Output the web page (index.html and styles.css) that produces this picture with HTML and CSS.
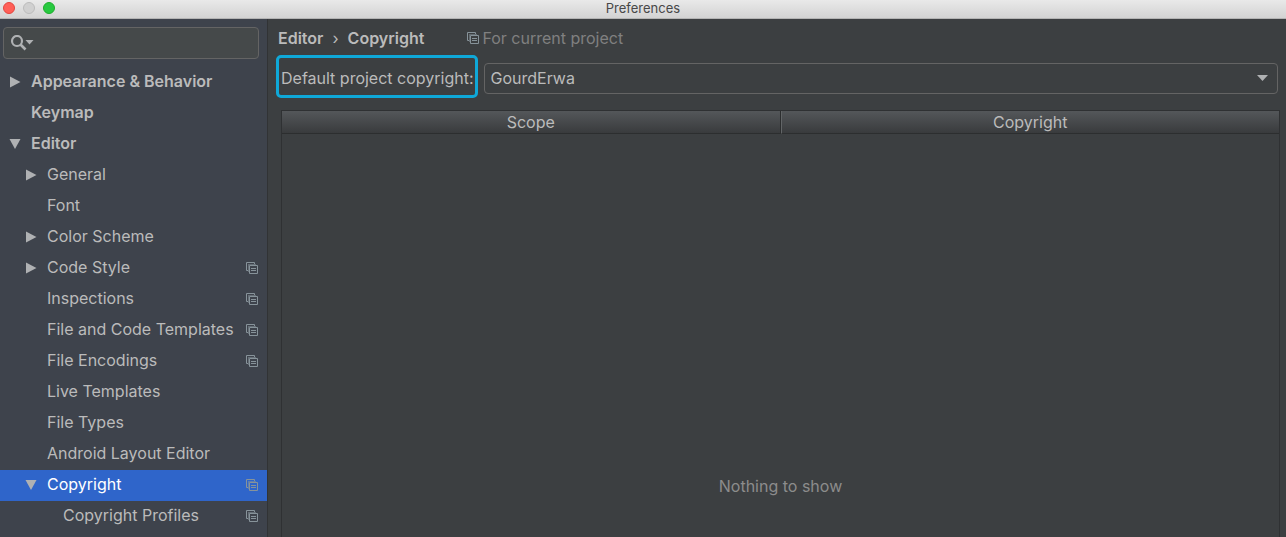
FILE: index.html
```
<!DOCTYPE html>
<html lang="en">
<head>
<meta charset="utf-8">
<title>Preferences</title>
<link rel="stylesheet" href="styles.css">
</head>
<body>
<svg class="symbols" aria-hidden="true">
  <symbol id="right" viewBox="0 0 12 12"><path d="M1 0.5V11.5L11.5 6Z" fill="#afb1b3"/></symbol>
  <symbol id="down" viewBox="0 0 12 12"><path d="M0.5 1H11.5L6 11Z" fill="#afb1b3"/></symbol>
  <symbol id="project" viewBox="0 0 12 12">
    <path d="M2 8.5H0.5V0.5H8.5V2" fill="none" stroke="currentColor"/>
    <path d="M2 2H10V3H3V10H2Z" fill="currentColor" opacity="0.55"/>
    <path d="M3.5 3.5H11.5V11.5H3.5ZM5 6.5H10M5 8.5H10" fill="none" stroke="currentColor"/>
  </symbol>
</svg>
<header class="titlebar">
  <div class="lights">
    <button class="light close" aria-label="Close"></button>
    <button class="light minimize" aria-label="Minimize" disabled></button>
    <button class="light expand" aria-label="Zoom"></button>
  </div>
  <h1 class="window-title">Preferences</h1>
</header>
<div class="window">
  <nav class="sidebar" aria-label="Settings">
    <label class="search">
      <svg class="search-icon" viewBox="0 0 24 16" aria-hidden="true">
        <circle cx="7" cy="6" r="5" fill="none" stroke="#afb1b3" stroke-width="2.2"/>
        <path d="M10.5 9.5L15.5 14.5" stroke="#afb1b3" stroke-width="2.6"/>
        <path d="M15.5 5H23.5L19.5 9.5Z" fill="#afb1b3"/>
      </svg>
      <input class="search-input" type="text" aria-label="Search settings">
    </label>
    <ul class="tree">
      <li><a class="row top" href="#appearance"><svg class="arrow"><use href="#right"/></svg><span class="name">Appearance &amp; Behavior</span></a></li>
      <li><a class="row top" href="#keymap"><span class="arrow"></span><span class="name">Keymap</span></a></li>
      <li><a class="row top" href="#editor"><svg class="arrow"><use href="#down"/></svg><span class="name">Editor</span></a>
        <ul class="tree-group">
          <li><a class="row child" href="#general"><svg class="arrow"><use href="#right"/></svg><span class="name">General</span></a></li>
          <li><a class="row child" href="#font"><span class="arrow"></span><span class="name">Font</span></a></li>
          <li><a class="row child" href="#color-scheme"><svg class="arrow"><use href="#right"/></svg><span class="name">Color Scheme</span></a></li>
          <li><a class="row child" href="#code-style"><svg class="arrow"><use href="#right"/></svg><span class="name">Code Style</span><svg class="scope-icon"><use href="#project"/></svg></a></li>
          <li><a class="row child" href="#inspections"><span class="arrow"></span><span class="name">Inspections</span><svg class="scope-icon"><use href="#project"/></svg></a></li>
          <li><a class="row child" href="#file-templates"><span class="arrow"></span><span class="name">File and Code Templates</span><svg class="scope-icon"><use href="#project"/></svg></a></li>
          <li><a class="row child" href="#encodings"><span class="arrow"></span><span class="name">File Encodings</span><svg class="scope-icon"><use href="#project"/></svg></a></li>
          <li><a class="row child" href="#live-templates"><span class="arrow"></span><span class="name">Live Templates</span></a></li>
          <li><a class="row child" href="#file-types"><span class="arrow"></span><span class="name">File Types</span></a></li>
          <li><a class="row child" href="#layout-editor"><span class="arrow"></span><span class="name">Android Layout Editor</span></a></li>
          <li><a class="row child selected" href="#copyright" aria-current="page"><svg class="arrow"><use href="#down"/></svg><span class="name">Copyright</span><svg class="scope-icon"><use href="#project"/></svg></a>
            <ul class="tree-group">
              <li><a class="row grandchild" href="#profiles"><span class="arrow"></span><span class="name">Copyright Profiles</span><svg class="scope-icon"><use href="#project"/></svg></a></li>
            </ul>
          </li>
        </ul>
      </li>
    </ul>
  </nav>
  <main class="content">
    <div class="heading">
      <h2 class="crumbs"><span>Editor</span><span class="separator">›</span><span>Copyright</span></h2>
      <p class="scope-note"><svg class="scope-icon"><use href="#project"/></svg>For current project</p>
    </div>
    <div class="field">
      <label class="field-label" for="default-copyright">Default project copyright:</label>
      <div class="combo">
        <select class="combo-select" id="default-copyright"><option>GourdErwa</option></select>
        <svg class="combo-arrow" viewBox="0 0 11 6" aria-hidden="true"><path d="M0 0H11L5.5 6Z" fill="#afb1b3"/></svg>
      </div>
    </div>
    <table class="scopes">
      <thead><tr><th scope="col">Scope</th><th scope="col">Copyright</th></tr></thead>
      <tbody><tr><td class="empty" colspan="2">Nothing to show</td></tr></tbody>
    </table>
  </main>
</div>
</body>
</html>
```
FILE: styles.css
```
* { box-sizing: border-box; }

body {
  margin: 0;
  min-height: 100vh;
  display: flex;
  flex-direction: column;
  background: #3c3f41;
  color: #bbbbbb;
  font: 16px/24px Inter, "Liberation Sans", sans-serif;
}

.symbols { display: none; }

.titlebar {
  flex: none;
  display: grid;
  grid-template-columns: 1fr auto 1fr;
  height: 19px;
  background: linear-gradient(#e9e9e9, #d3d3d3);
  border-bottom: 1px solid #b4b4b4;
}
.lights { display: flex; gap: 8px; padding: 2px 3px; }
.light {
  width: 12px;
  height: 12px;
  padding: 0;
  border: 1px solid #e2463f;
  border-radius: 50%;
  background: #ff5f57;
}
.minimize { border-color: #bcbcbc; background: #d0d0d0; }
.expand { border-color: #1dad2b; background: #28c940; }
.window-title {
  margin: 0;
  font-size: 13px;
  font-weight: 400;
  line-height: 17px;
  color: #484848;
}

.window { flex: 1; display: flex; }

.sidebar {
  flex: none;
  width: 268px;
  padding-top: 8px;
  background: #3e434c;
  border-right: 1px solid #313335;
}
.search {
  display: flex;
  align-items: center;
  height: 32px;
  margin: 0 8px 8px 3px;
  padding: 0 6px;
  border: 1px solid #646464;
  border-radius: 4px;
  background: #45494a;
}
.search-icon { flex: none; width: 24px; height: 16px; }
.search-input {
  flex: 1;
  min-width: 0;
  border: 0;
  outline: 0;
  background: transparent;
  color: inherit;
  font: inherit;
}

.tree, .tree-group { margin: 0; padding: 0; list-style: none; }
.row {
  display: flex;
  align-items: center;
  gap: 10px;
  height: 31px;
  padding: 0 9px 2px;
  line-height: 23px;
  color: inherit;
  text-decoration: none;
}
.top { font-weight: 600; }
.child { padding-left: 25px; }
.grandchild { padding-left: 41px; }
.selected { background: #2f65ca; color: #ffffff; }
.arrow { flex: none; width: 12px; height: 12px; }
.name { flex: 1; white-space: nowrap; }
.scope-icon { flex: none; width: 12px; height: 12px; color: #87939a; }

.content {
  flex: 1;
  min-width: 0;
  display: flex;
  flex-direction: column;
  padding: 7px 6px 0 8px;
}
.heading { display: flex; gap: 43px; padding-left: 2px; }
.crumbs { display: flex; gap: 9px; margin: 0; font-size: 16px; font-weight: 600; }
.separator { font-weight: 400; }
.scope-note {
  display: flex;
  align-items: center;
  gap: 3px;
  margin: 0;
  color: #808080;
}

.field { display: flex; align-items: center; gap: 6px; margin-top: 5px; }
.field-label {
  flex: none;
  padding: 10px 1px 6px 2px;
  border: 3px solid #0fa8d8;
  border-radius: 5px;
  line-height: 21px;
}
.combo { flex: 1; display: grid; align-items: center; padding: 3px 2px 0 0; }
.combo-select, .combo-arrow { grid-area: 1 / 1; }
.combo-select {
  appearance: none;
  width: 100%;
  height: 31px;
  padding: 0 32px 0 6px;
  border: 1px solid #646464;
  border-radius: 4px;
  background: transparent;
  color: inherit;
  font: inherit;
}
.combo-arrow {
  justify-self: end;
  width: 11px;
  height: 6px;
  margin-right: 10px;
  pointer-events: none;
}

.scopes {
  flex: 1;
  margin: 12px 0 0 5px;
  border: 1px solid #2f3133;
  border-bottom: 0;
  border-spacing: 0;
}
.scopes th {
  width: 50%;
  height: 23px;
  padding: 0;
  border-bottom: 1px solid #2c2e2f;
  background: linear-gradient(#54575a, #393b3d);
  font-weight: 400;
  line-height: 22px;
}
.scopes th:first-child { border-right: 1px solid #2c2e2f; }
.scopes th:last-child { border-left: 1px solid #626567; }
.empty {
  height: 100%;
  padding: 340px 0 0;
  color: #8c8c8c;
  text-align: center;
  vertical-align: top;
}
```
